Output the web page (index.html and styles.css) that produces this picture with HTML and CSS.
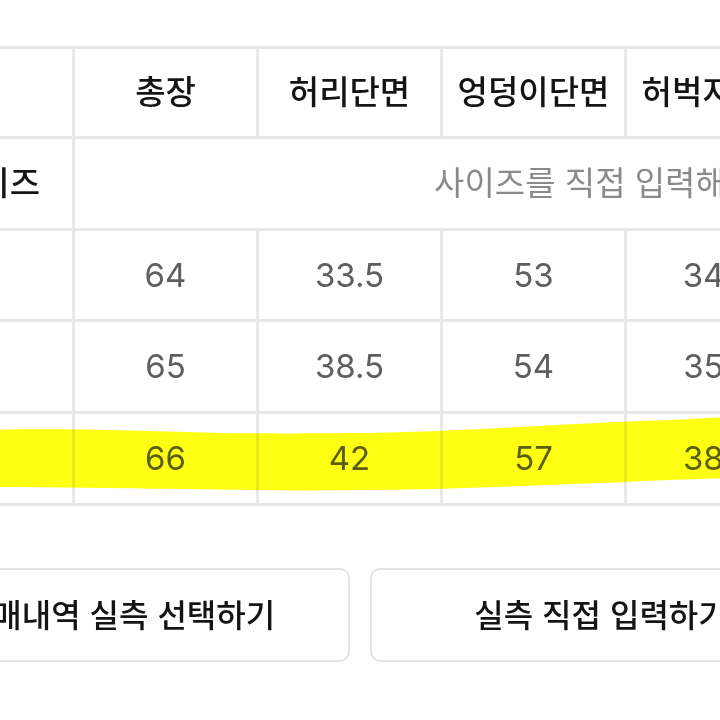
FILE: index.html
```html
<!DOCTYPE html>
<html lang="ko">
<head>
<meta charset="utf-8">
<title>실측 사이즈</title>
<link rel="stylesheet" href="styles.css">
</head>
<body>
<main class="page">
  <section class="table-wrap">
    <div class="size-table">
      <div class="cell head"></div>
      <div class="cell head">총장</div>
      <div class="cell head">허리단면</div>
      <div class="cell head">엉덩이단면</div>
      <div class="cell head">허벅지단면</div>
      <div class="cell head">밑위</div>
      <div class="cell head">밑단단면</div>

      <div class="cell label label-offset">사이즈</div>
      <div class="cell input-cell">사이즈를 직접 입력해주세요</div>

      <div class="cell label">S</div>
      <div class="cell num">64</div>
      <div class="cell num">33.5</div>
      <div class="cell num">53</div>
      <div class="cell num">34.5</div>
      <div class="cell num">27</div>
      <div class="cell num">21</div>

      <div class="cell label">M</div>
      <div class="cell num">65</div>
      <div class="cell num">38.5</div>
      <div class="cell num">54</div>
      <div class="cell num">35.5</div>
      <div class="cell num">28</div>
      <div class="cell num">22</div>

      <div class="cell label">L</div>
      <div class="cell num">66</div>
      <div class="cell num">42</div>
      <div class="cell num">57</div>
      <div class="cell num">38.5</div>
      <div class="cell num">29</div>
      <div class="cell num">23</div>
    </div>
    <svg class="highlight" width="720" height="80" viewBox="0 0 720 80" aria-hidden="true">
      <path d="M-5,14 C60,12 140,15 220,17 C290,18 330,17 370,17 C470,15 560,8 640,5 C680,4 705,2 725,1 L725,62 C690,63 640,65 600,67 C520,70 440,74 360,74 C300,75 240,74 180,73 C110,72 50,71 -5,71 Z" fill="#ffff14"/>
    </svg>
  </section>
  <div class="actions">
    <button class="action-btn" type="button">구매내역 실측 선택하기</button>
    <button class="action-btn" type="button">실측 직접 입력하기</button>
  </div>
</main>
</body>
</html>
```

FILE: styles.css
```css
html, body {
  margin: 0;
  padding: 0;
  background: #ffffff;
}

body {
  width: 720px;
  height: 720px;
  overflow: hidden;
  font-family: "Noto Sans CJK KR", "Noto Sans", sans-serif;
}

.page {
  margin-left: -112px;
  padding-top: 46px;
  width: 1300px;
}

.table-wrap {
  position: relative;
}

.size-table {
  display: grid;
  grid-template-columns: repeat(7, 181px);
  grid-template-rows: 87px 89px 88px 89px 89px;
  gap: 3px;
  padding: 3px;
  width: max-content;
  background: #e8e8e8;
}

.cell {
  background: #ffffff;
  display: flex;
  align-items: center;
  justify-content: center;
  font-size: 33px;
  line-height: 1;
  white-space: nowrap;
  padding-bottom: 4px;
  box-sizing: border-box;
}

.head {
  color: #141414;
  font-weight: 500;
}

.label {
  color: #141414;
  font-weight: 500;
}

.label-offset {
  padding-left: 26px;
}

.input-cell {
  grid-column: span 6;
  color: #8a8a8a;
}

.num {
  font-family: "Inter", "Liberation Sans", sans-serif;
  font-size: 33px;
  color: #5e5e5e;
  padding-bottom: 0;
}

.highlight {
  position: absolute;
  left: 112px;
  top: 370px;
  mix-blend-mode: multiply;
  pointer-events: none;
}

.actions {
  display: flex;
  gap: 20px;
  margin-top: 62px;
}

.action-btn {
  width: 462px;
  height: 94px;
  border: 2px solid #e4e4e4;
  border-radius: 10px;
  background: #ffffff;
  font-family: "Noto Sans CJK KR", "Noto Sans", sans-serif;
  font-size: 32px;
  font-weight: 500;
  color: #141414;
  padding: 0 0 4px;
}
```
